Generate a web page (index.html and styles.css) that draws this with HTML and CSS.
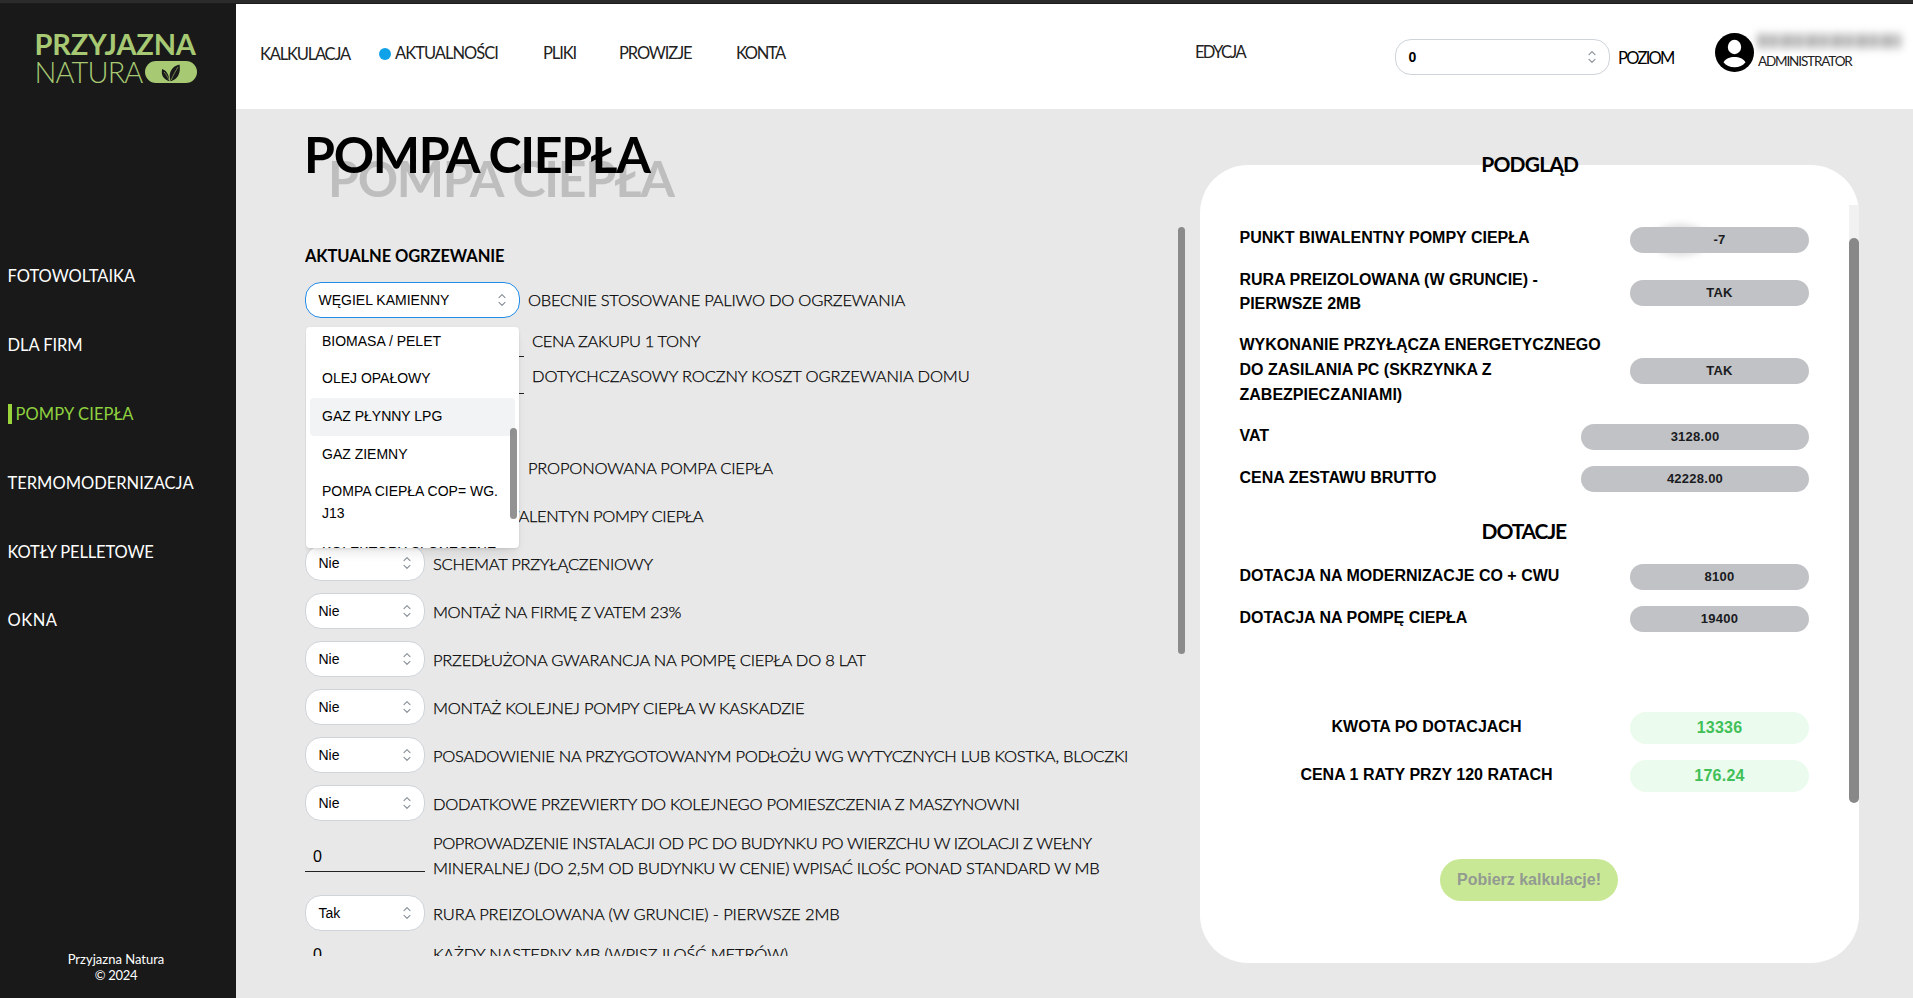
FILE: index.html
```html
<!DOCTYPE html>
<html lang="pl">
<head>
<meta charset="utf-8">
<title>Przyjazna Natura – Pompa ciepła</title>
<link rel="stylesheet" href="styles.css">
</head>
<body>
<svg class="defs" width="0" height="0">
  <symbol id="chev" viewBox="0 0 8 14"><path d="M1 4.6 4 1.6 7 4.6M1 9.4 4 12.4 7 9.4" fill="none" stroke="#868e96" stroke-width="1.1" stroke-linecap="round" stroke-linejoin="round"/></symbol>
</svg>
<div class="topstrip"></div>
<div class="app">
  <aside class="sidebar">
    <div class="logo">
      <div class="logo-top">PRZYJAZNA</div>
      <div class="logo-bottom"><span>NATURA</span>
        <svg width="52" height="22" viewBox="0 0 52 22"><rect width="52" height="22" rx="11" fill="#a7c973"/><path d="M24.4 20.2C19 18.500 15.600 14.500 17.200 8c4 1.800 6.600 4.500 7.200 12.200z" fill="#191919"/><path d="M25.600 20.200C23 12.500 26 5.500 34.500 3.500 36 11.500 33 18.500 25.600 20.200z" fill="#191919"/><path d="M24 19C22.500 15.500 20.500 12.500 19 11M26.300 19C28 14 31 9.500 33 6" stroke="#a7c973" stroke-width=".6" fill="none"/></svg>
      </div>
    </div>
    <nav class="menu">
      <a class="m-foto">FOTOWOLTAIKA</a>
      <a class="m-firm">DLA FIRM</a>
      <a class="active">POMPY CIEPŁA</a>
      <a class="m-term">TERMOMODERNIZACJA</a>
      <a class="m-kotl">KOTŁY PELLETOWE</a>
      <a class="m-okna">OKNA</a>
    </nav>
    <footer class="copy"><div>Przyjazna Natura</div><div class="year">© 2024</div></footer>
  </aside>
  <div class="page">
    <header class="header">
      <a class="h-kalk">KALKULACJA</a>
      <a class="h-akt"><i class="dot"></i><span>AKTUALNOŚCI</span></a>
      <a class="h-pliki">PLIKI</a>
      <a class="h-prow">PROWIZJE</a>
      <a class="h-konta">KONTA</a>
      <a class="h-edycja">EDYCJA</a>
      <div class="select level"><b>0</b><svg width="8" height="14"><use href="#chev"/></svg></div>
      <span class="h-poziom">POZIOM</span>
      <svg class="avatar" width="39" height="39" viewBox="0 0 39 39"><circle cx="19.500" cy="19.500" r="19.500"/><ellipse cx="19.500" cy="14" rx="6.700" ry="7.200" fill="#fff"/><path d="M8.500 29.300C10.500 25.800 14.800 24 19.500 24s9 1.800 11 5.300C28 32.700 24 34.300 19.500 34.300S11 32.700 8.500 29.300z" fill="#fff"/></svg>
      <div class="user"><div class="hidden-name"></div><div class="role">ADMINISTRATOR</div></div>
    </header>
    <div class="body">
      <main class="main">
        <h1 class="title">POMPA CIEPŁA</h1>
        <div class="form-area">
          <div class="form">
            <h2 class="section">AKTUALNE OGRZEWANIE</h2>
            <div class="row fuel">
              <div class="select wide focus">WĘGIEL KAMIENNY<svg width="8" height="14"><use href="#chev"/></svg></div>
              <label>OBECNIE STOSOWANE PALIWO DO OGRZEWANIA</label>
              <div class="dropdown">
                <div class="options">
                  <div class="opt">BIOMASA / PELET</div>
                  <div class="opt">OLEJ OPAŁOWY</div>
                  <div class="opt hover">GAZ PŁYNNY LPG</div>
                  <div class="opt">GAZ ZIEMNY</div>
                  <div class="opt">POMPA CIEPŁA COP= WG. J13</div>
                  <div class="opt last">KOLEKTORY SŁONECZNE</div>
                </div>
                <div class="thumb"></div>
              </div>
            </div>
            <div class="row line-row"><div class="input long"></div><label class="tight">CENA ZAKUPU 1 TONY</label></div>
            <div class="row line-row"><div class="input long"></div><label class="loose">DOTYCHCZASOWY ROCZNY KOSZT OGRZEWANIA DOMU</label></div>
            <div class="row pump"><div class="select wide covered"></div><label class="mid">PROPONOWANA POMPA CIEPŁA</label></div>
            <div class="row"><div class="select covered"></div><label class="tight">PUNKT BIWALENTYN POMPY CIEPŁA</label></div>
            <div class="row"><div class="select">Nie<svg width="8" height="14"><use href="#chev"/></svg></div><label>SCHEMAT PRZYŁĄCZENIOWY</label></div>
            <div class="row"><div class="select">Nie<svg width="8" height="14"><use href="#chev"/></svg></div><label class="tight">MONTAŻ NA FIRMĘ Z VATEM 23%</label></div>
            <div class="row"><div class="select">Nie<svg width="8" height="14"><use href="#chev"/></svg></div><label>PRZEDŁUŻONA GWARANCJA NA POMPĘ CIEPŁA DO 8 LAT</label></div>
            <div class="row"><div class="select">Nie<svg width="8" height="14"><use href="#chev"/></svg></div><label>MONTAŻ KOLEJNEJ POMPY CIEPŁA W KASKADZIE</label></div>
            <div class="row"><div class="select">Nie<svg width="8" height="14"><use href="#chev"/></svg></div><label>POSADOWIENIE NA PRZYGOTOWANYM PODŁOŻU WG WYTYCZNYCH LUB KOSTKA, BLOCZKI</label></div>
            <div class="row"><div class="select">Nie<svg width="8" height="14"><use href="#chev"/></svg></div><label>DODATKOWE PRZEWIERTY DO KOLEJNEGO POMIESZCZENIA Z MASZYNOWNI</label></div>
            <div class="row two"><div class="input">0</div><label><span class="tight">POPROWADZENIE INSTALACJI OD PC DO BUDYNKU PO WIERZCHU W IZOLACJI Z WEŁNY</span><br>MINERALNEJ (DO 2,5M OD BUDYNKU W CENIE) WPISAĆ ILOŚC PONAD STANDARD W MB</label></div>
            <div class="row"><div class="select">Tak<svg width="8" height="14"><use href="#chev"/></svg></div><label class="loose">RURA PREIZOLOWANA (W GRUNCIE) - PIERWSZE 2MB</label></div>
            <div class="row end"><div class="input">0</div><label class="loose">KAŻDY NASTĘPNY MB (WPISZ ILOŚĆ METRÓW)</label></div>
          </div>
          <div class="form-thumb"></div>
        </div>
      </main>
      <section class="panel">
        <h3 class="panel-title">PODGLĄD</h3>
        <div class="track"><div class="panel-thumb"></div></div>
        <div class="items">
          <div class="item"><span>PUNKT BIWALENTNY POMPY CIEPŁA</span><b class="pill smudge">-7</b></div>
          <div class="item"><span>RURA PREIZOLOWANA (W GRUNCIE) -<br>PIERWSZE 2MB</span><b class="pill">TAK</b></div>
          <div class="item"><span>WYKONANIE PRZYŁĄCZA ENERGETYCZNEGO<br>DO ZASILANIA PC (SKRZYNKA Z<br>ZABEZPIECZANIAMI)</span><b class="pill">TAK</b></div>
          <div class="item"><span>VAT</span><b class="pill big">3128.00</b></div>
          <div class="item"><span>CENA ZESTAWU BRUTTO</span><b class="pill big">42228.00</b></div>
        </div>
        <h3 class="dotacje">DOTACJE</h3>
        <div class="items">
          <div class="item"><span>DOTACJA NA MODERNIZACJE CO + CWU</span><b class="pill">8100</b></div>
          <div class="item"><span>DOTACJA NA POMPĘ CIEPŁA</span><b class="pill">19400</b></div>
        </div>
        <div class="totals">
          <div class="total"><span>KWOTA PO DOTACJACH</span><b class="pill green">13336</b></div>
          <div class="total"><span>CENA 1 RATY PRZY 120 RATACH</span><b class="pill green">176.24</b></div>
        </div>
        <button class="download">Pobierz kalkulacje!</button>
      </section>
    </div>
  </div>
</div>
</body>
</html>
```
FILE: styles.css
```css
* { box-sizing: border-box; }
body { margin: 0; width: 1913px; height: 998px; overflow: hidden; background: #e8e8e8; color: #000; font-family: Lato, sans-serif; }
.defs { display: block; }
.topstrip { height: 4px; background: #2b2b2b; border-bottom: 1px solid #1c1c1c; }
.app { display: flex; height: 994px; }

/* sidebar */
.sidebar { flex: none; width: 236px; background: #191919; color: #fff; display: flex; flex-direction: column; }
.logo { color: #a7c973; padding: 25px 0 0 34.500px; height: 248px; }
.logo-top { font-size: 29px; font-weight: 700; line-height: 29px; letter-spacing: -.2px; }
.logo-bottom { display: flex; align-items: center; height: 28px; }
.logo-bottom span { width: 110px; font-size: 29px; font-weight: 300; line-height: 28px; letter-spacing: -.9px; }
.menu { display: flex; flex-direction: column; font-size: 16.5px; line-height: 20px; padding: 14px 0 0 7.5px; gap: 48.9px; height: 620px; }
.m-firm { letter-spacing: -.05px; }
.m-okna { letter-spacing: .5px; }
.m-kotl { letter-spacing: -.15px; }
.menu .active { color: #8fd13f; border-left: 4px solid #9ad53c; margin-left: .5px; padding-left: 3.5px; letter-spacing: .1px; }
.copy { font-size: 13px; line-height: 16px; text-align: center; padding: 79px 4px 0 0; }
.year { letter-spacing: -.3px; }

/* header */
.page { flex: 1; min-width: 0; }
.header { height: 105px; background: #fff; display: flex; padding: 28px 0 0 24px; font-size: 16.5px; line-height: 20px; color: #222; }
.header > * { flex: none; }
.header a { margin-top: 11px; white-space: nowrap; }
.header .h-kalk { width: 119px; letter-spacing: -1.2px; margin-top: 12px; }
.h-akt { width: 164px; display: flex; letter-spacing: -.98px; }
.dot { width: 12px; height: 12px; border-radius: 50%; background: #10a2e8; margin: 5px 4px 0 0; }
.h-pliki { width: 76px; letter-spacing: -1.1px; }
.h-prow { width: 117px; letter-spacing: -1.1px; }
.h-konta { width: 459px; letter-spacing: -1.4px; }
.header .h-edycja { width: 200px; letter-spacing: -1.7px; margin-top: 10px; }
.header .level { width: 215px; margin-top: 7px; border-color: #ced4da; padding-right: 13px; font: 700 14px/20px "Liberation Sans", sans-serif; }
.h-poziom { width: 105px; padding-left: 8px; margin-top: 16px; letter-spacing: -1.7px; color: #000; }
.avatar { margin-top: 1px; }
.user { padding-left: 4px; }
.hidden-name { width: 143px; height: 14px; margin-top: 2px; opacity: .5; filter: blur(4px); background: repeating-linear-gradient(95deg, #444 0 7px, #aaa 7px 12px, #666 12px 21px, #ddd 21px 25px); }
.role { font-size: 13.5px; line-height: 16px; letter-spacing: -1.150px; margin-top: 5px; }

/* form */
.body { display: flex; height: 889px; }
.main { width: 964px; padding-left: 69px; }
.title { margin: 0; height: 118px; padding-top: 14px; font-size: 50px; font-weight: 700; line-height: 62px; letter-spacing: -1.300px; text-indent: -1px; text-shadow: 24px 24px 0 #bebebe; }
.form-area { display: flex; justify-content: space-between; width: 880px; height: 729px; }
.form { width: 860px; height: 729px; overflow: hidden; display: flex; flex-direction: column; gap: 12px; }
.form > * { flex: none; }
.section { margin: 0; padding-top: 18.500px; height: 43px; font-size: 16.5px; font-weight: 700; line-height: 20px; letter-spacing: -.1px; }
.row { display: flex; align-items: center; height: 36px; }
label { font-size: 16.5px; font-weight: 300; line-height: 25px; letter-spacing: -.25px; padding: 3px 0 0 8px; white-space: nowrap; -webkit-text-stroke: .25px #000; }
.tight { letter-spacing: -.370px; }
.loose { letter-spacing: -.110px; }
.mid { letter-spacing: -.2px; }
.select { width: 120px; height: 36px; background: #fff; border: 1px solid #ced4da; border-radius: 16px; display: flex; align-items: center; justify-content: space-between; padding: 0 13px 0 12.500px; font: 14px/20px "Liberation Sans", sans-serif; color: #000; }
.wide { width: 215px; }
.focus { border-color: #228be6; }
.focus + label { padding-top: 1px; }
.covered { visibility: hidden; }
.fuel { position: relative; }
.line-row { margin-bottom: -11.500px; }
.line-row label { padding-top: 1px; }
.fuel + .line-row { margin-top: -9px; }
.fuel + .line-row label { padding-top: 4px; }
.input { width: 120px; height: 36px; border-bottom: 1px solid #222; padding: 6px 0 0 8px; font: 16px/24px "Liberation Sans", sans-serif; }
.form .input.long { width: 217px; margin-left: 2px; }
.pump { margin-top: 55px; }
.two { height: 50px; }
.two .input { margin-bottom: 8px; padding-top: 9px; }
.two label { padding: 0 0 5px 8px; }
.end { height: 21px; }
.end .input { height: 21px; padding-top: 0; }
.end label { padding-top: 1px; }
.dropdown { position: absolute; left: 1px; top: 45px; width: 213px; height: 221px; background: #fff; border-radius: 4px; box-shadow: 0 1px 3px rgba(0,0,0,.1), 0 8px 12px -5px rgba(0,0,0,.12); z-index: 5; overflow: hidden; }
.options { padding: 0 4px; margin-top: -4.500px; font: 14px/21.700px "Liberation Sans", sans-serif; }
.opt { padding: 8px 12px; border-radius: 4px; }
.hover { background: #f1f3f5; }
.last { white-space: nowrap; margin-top: 1px; }
.thumb { position: absolute; left: 204px; top: 101px; width: 7px; height: 91px; border-radius: 4px; background: rgba(110,110,110,.75); }
.form-thumb { width: 7px; height: 427px; border-radius: 4px; background: #8b8b8b; }

/* preview panel */
.panel { position: relative; z-index: 0; width: 659px; height: 798px; margin-top: 56px; background: #fff; border-radius: 48px; padding: 0 50px 0 39.500px; font-family: "Liberation Sans", sans-serif; }
.panel-title, .dotacje { margin: 0 -11px 0 0; height: 20px; font: 700 21px/20px Lato, sans-serif; letter-spacing: -.8px; text-align: center; }
.panel-title { margin-top: -11px; }
.dotacje { letter-spacing: -1.2px; margin: 29px 0 0 -1px; }
.items { display: flex; flex-direction: column; gap: 16px; font-size: 16px; font-weight: 700; line-height: 24.800px; }
.panel-title ~ .items { padding-top: 52.500px; }
.dotacje ~ .items { padding-top: 23px; }
.item, .total { display: flex; justify-content: space-between; align-items: center; min-height: 26px; white-space: nowrap; }
.item span { margin: -1px 0 1px; }
.pill { width: 179px; height: 26px; border-radius: 16px; background: #c1c2c5; color: #1a1b1e; font-size: 13px; line-height: 26px; letter-spacing: .25px; text-align: center; }
.big { width: 228px; }
.smudge { position: relative; }
.smudge::before { content: ""; position: absolute; z-index: -1; left: 22px; top: -3px; width: 56px; height: 32px; border-radius: 50%; background: #c1c2c5; opacity: .5; filter: blur(3px); }
.track { position: absolute; right: 0; top: 40px; width: 10.500px; height: 598px; padding-top: 33px; background: linear-gradient(#f1f1f1 0 45px, transparent 45px); }
.panel-thumb { height: 565px; border-radius: 6px; background: #888; }
.totals { display: flex; flex-direction: column; gap: 12px; padding-top: 80px; font-size: 16px; font-weight: 700; }
.total { height: 36px; align-items: flex-start; }
.total span { width: 374px; text-align: center; line-height: 30px; }
.green { height: 32px; line-height: 32px; font-size: 16px; background: #ebfbee; color: #40c057; }
.download { display: block; width: 178px; height: 42px; margin: 63px 0 0 200.500px; padding: 0; border: 0; border-radius: 21px; background: #c8e896; color: #939a91; font: 700 16px/42px "Liberation Sans", sans-serif; }
```
